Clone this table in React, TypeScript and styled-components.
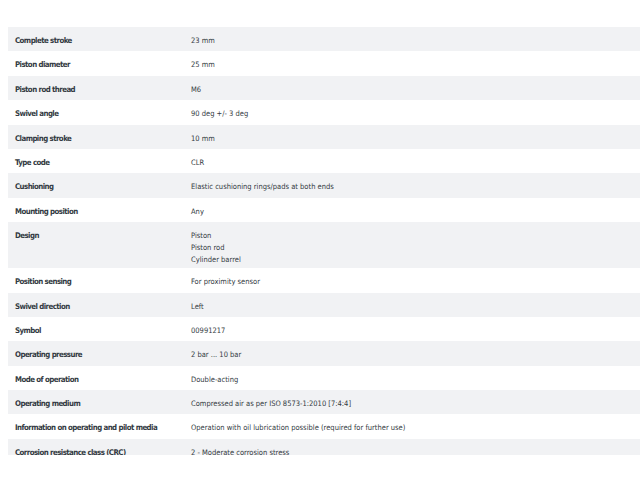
import styled, { createGlobalStyle } from "styled-components";

const GlobalStyle = createGlobalStyle`
  html, body {
    margin: 0;
    padding: 0;
    background: #ffffff;
  }
`;

const Page = styled.div`
  height: 455px;
  overflow: hidden;
  padding: 27px 0 0 8px;
  box-sizing: border-box;
  font-family: "Liberation Sans Narrow", "DejaVu Sans Condensed", "Roboto", sans-serif;
  font-stretch: condensed;
  color: #333a42;
`;

const Table = styled.div`
  display: flex;
  flex-direction: column;
`;

const Row = styled.div<{ $shaded: boolean }>`
  display: grid;
  grid-template-columns: 183px 1fr;
  min-height: 24.4px;
  box-sizing: border-box;
  padding: 8px 0 2px;
  background: ${(p) => (p.$shaded ? "#f1f2f4" : "#ffffff")};
  line-height: 12px;
`;

const Label = styled.div`
  padding-left: 7px;
  font-weight: bold;
  font-size: 7.8px;
  letter-spacing: -0.55px;
`;

const Value = styled.div`
  display: flex;
  flex-direction: column;
  font-size: 7.5px;
`;

const specs: [string, string[]][] = [
  ["Complete stroke", ["23 mm"]],
  ["Piston diameter", ["25 mm"]],
  ["Piston rod thread", ["M6"]],
  ["Swivel angle", ["90 deg +/- 3 deg"]],
  ["Clamping stroke", ["10 mm"]],
  ["Type code", ["CLR"]],
  ["Cushioning", ["Elastic cushioning rings/pads at both ends"]],
  ["Mounting position", ["Any"]],
  ["Design", ["Piston", "Piston rod", "Cylinder barrel"]],
  ["Position sensing", ["For proximity sensor"]],
  ["Swivel direction", ["Left"]],
  ["Symbol", ["00991217"]],
  ["Operating pressure", ["2 bar ... 10 bar"]],
  ["Mode of operation", ["Double-acting"]],
  ["Operating medium", ["Compressed air as per ISO 8573-1:2010 [7:4:4]"]],
  ["Information on operating and pilot media", ["Operation with oil lubrication possible (required for further use)"]],
  ["Corrosion resistance class (CRC)", ["2 - Moderate corrosion stress"]],
];

export default function App() {
  return (
    <>
      <GlobalStyle />
      <Page>
        <Table>
          {specs.map(([label, values], i) => (
            <Row key={label} $shaded={i % 2 === 0}>
              <Label>{label}</Label>
              <Value>
                {values.map((v) => (
                  <span key={v}>{v}</span>
                ))}
              </Value>
            </Row>
          ))}
        </Table>
      </Page>
    </>
  );
}
